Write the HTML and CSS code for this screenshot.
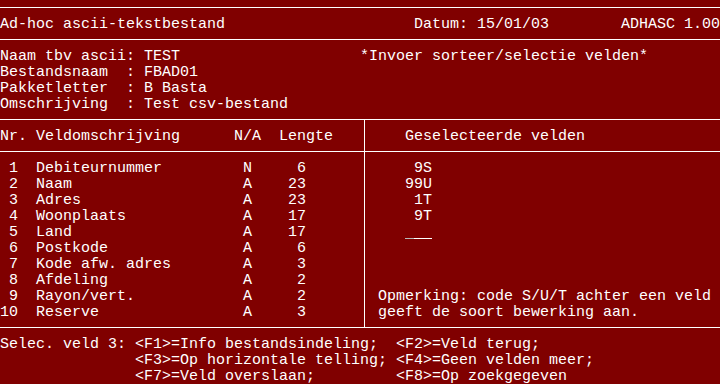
FILE: index.html
```html
<!DOCTYPE html>
<html lang="nl">
<head>
    <meta charset="UTF-8">
    <meta name="viewport" content="width=device-width, initial-scale=1.0">
    <title>Ad-hoc ascii-tekstbestand</title>
    <link rel="stylesheet" href="styles.css">
</head>
<body>
    <div class="screen">
        <div class="rule"></div>

        <div class="row header">
            <span class="title">Ad-hoc ascii-tekstbestand</span>
            <span class="date">Datum: 15/01/03</span>
            <span class="version">ADHASC 1.00</span>
        </div>

        <div class="rule"></div>

        <div class="info">
            <div class="info-fields">
                <div class="row">Naam tbv ascii: TEST</div>
                <div class="row">Bestandsnaam  : FBAD01</div>
                <div class="row">Pakketletter  : B Basta</div>
                <div class="row">Omschrijving  : Test csv-bestand</div>
            </div>
            <div class="row notice">*Invoer sorteer/selectie velden*</div>
        </div>

        <div class="panel">
            <div class="panel-left">
                <div class="field-head">
                    <span>Nr.</span>
                    <span>Veldomschrijving</span>
                    <span>N/A</span>
                    <span>Lengte</span>
                </div>
                <div class="rule"></div>
                <div class="field-list">
                    <span class="nr">1</span><span>Debiteurnummer</span><span>N</span><span class="len">6</span>
                    <span class="nr">2</span><span>Naam</span><span>A</span><span class="len">23</span>
                    <span class="nr">3</span><span>Adres</span><span>A</span><span class="len">23</span>
                    <span class="nr">4</span><span>Woonplaats</span><span>A</span><span class="len">17</span>
                    <span class="nr">5</span><span>Land</span><span>A</span><span class="len">17</span>
                    <span class="nr">6</span><span>Postkode</span><span>A</span><span class="len">6</span>
                    <span class="nr">7</span><span>Kode afw. adres</span><span>A</span><span class="len">3</span>
                    <span class="nr">8</span><span>Afdeling</span><span>A</span><span class="len">2</span>
                    <span class="nr">9</span><span>Rayon/vert.</span><span>A</span><span class="len">2</span>
                    <span class="nr">10</span><span>Reserve</span><span>A</span><span class="len">3</span>
                </div>
            </div>

            <div class="panel-right">
                <div class="row selected-head">Geselecteerde velden</div>
                <div class="rule"></div>
                <div class="row selected">9S</div>
                <div class="row selected">99U</div>
                <div class="row selected">1T</div>
                <div class="row selected">9T</div>
                <div class="row input-row">
                    <span class="cell cursor"></span><span class="cell"></span><span class="cell"></span>
                </div>
                <div class="row"></div>
                <div class="row"></div>
                <div class="row"></div>
                <div class="row remark">Opmerking: code S/U/T achter een veld</div>
                <div class="row remark">geeft de soort bewerking aan.</div>
            </div>
        </div>

        <div class="keys">
            <span>Selec. veld 3:</span>
            <span>&lt;F1&gt;=Info bestandsindeling;</span>
            <span>&lt;F2&gt;=Veld terug;</span>
            <span></span>
            <span>&lt;F3&gt;=Op horizontale telling;</span>
            <span>&lt;F4&gt;=Geen velden meer;</span>
            <span></span>
            <span>&lt;F7&gt;=Veld overslaan;</span>
            <span>&lt;F8&gt;=Op zoekgegeven</span>
        </div>
    </div>
</body>
</html>
```

FILE: styles.css
```css
* {
    margin: 0;
    padding: 0;
    box-sizing: border-box;
}

body {
    background-color: #800000;
}

.screen {
    width: 720px;
    height: 384px;
    overflow: hidden;
    background: #800000;
    color: #ffffff;
    font-family: 'Liberation Mono', 'DejaVu Sans Mono', monospace;
    font-size: 15px;
}

.row {
    height: 16px;
    line-height: 18px;
    white-space: pre;
}

/* ligne horizontale au milieu d'une ligne de 16px */
.rule {
    height: 1px;
    margin: 7px 0 8px;
    background: #ffffff;
}

.header {
    display: flex;
}

.title {
    width: 46ch;
}

.date {
    width: 23ch;
}

.info {
    display: flex;
}

.info-fields {
    width: 40ch;
}

.panel {
    display: flex;
    margin-top: 7px;
    margin-bottom: 8px;
    border-top: 1px solid #ffffff;
    border-bottom: 1px solid #ffffff;
}

.panel-left,
.panel-right {
    padding: 8px 0 7px;
}

.panel-left {
    width: 364px;
}

.panel-right {
    flex: 1;
    border-left: 1px solid #ffffff;
    padding-left: 4px;
}

.panel-right .rule {
    margin-left: -4px;
}

.field-head {
    display: grid;
    grid-template-columns: 4ch 22ch 5ch auto;
    height: 16px;
    line-height: 18px;
    white-space: pre;
}

.field-list {
    display: grid;
    grid-template-columns: 4ch 23ch 1ch 6ch;
    grid-auto-rows: 16px;
    line-height: 18px;
    white-space: pre;
}

.field-list .nr {
    width: 2ch;
    text-align: right;
}

.field-list .len {
    text-align: right;
}

.selected-head {
    padding-left: 4ch;
}

.selected {
    width: 7ch;
    text-align: right;
}

.input-row {
    display: flex;
    padding-left: 4ch;
}

.cell {
    width: 1ch;
    height: 15px;
    border-bottom: 1px solid #ffffff;
}

.cell.cursor {
    border-bottom-color: #b8b8b8;
}

.remark {
    padding-left: 1ch;
}

.keys {
    display: grid;
    grid-template-columns: 15ch 29ch auto;
    grid-auto-rows: 16px;
    line-height: 18px;
    white-space: pre;
}
```
